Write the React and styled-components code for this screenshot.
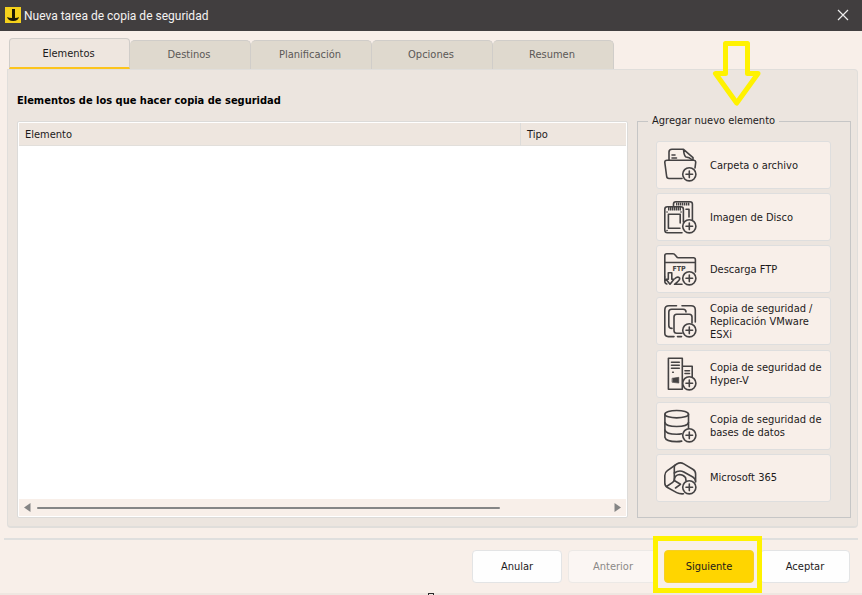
import React from "react";
import styled, { createGlobalStyle } from "styled-components";

const GlobalStyle = createGlobalStyle`
  *, *::before, *::after { box-sizing: border-box; }
  body {
    margin: 0;
    background: #f8efe9;
    color: #1c1a1b;
    font-family: "DejaVu Sans Condensed", "DejaVu Sans", sans-serif;
    font-stretch: condensed;
    font-size: 11px;
    line-height: 13px;
  }
  button { font: inherit; color: inherit; }
`;

const Window = styled.div`
  position: relative;
  display: flex;
  flex-direction: column;
  min-height: 100vh;
  border-bottom: 2px solid #efe7e1;
`;

const ResizeMark = styled.span`
  position: absolute;
  bottom: -2px;
  left: 50%;
  width: 6px;
  height: 2px;
  margin-left: -3px;
  border: 1px solid #2b2a2a;
  border-bottom: 0;
`;

const TitleBar = styled.header`
  display: flex;
  align-items: center;
  gap: 3px;
  height: 31px;
  padding: 0 13px 2px 5px;
  background: #413e3f;
  color: #f4f2f2;
`;

const Title = styled.h1`
  flex: 1;
  margin: 0;
  padding-top: 2px;
  font: 400 12px/16px Roboto, "Noto Sans", sans-serif;
`;

const CloseButton = styled.button`
  display: flex;
  padding: 0;
  border: 0;
  background: none;
  color: #eeeeee;
`;

const Body = styled.main`
  display: flex;
  flex: 1;
  flex-direction: column;
  padding: 7px 4px 0 7px;
`;

const Tabs = styled.div`
  display: flex;
  align-items: flex-end;
  height: 31px;
  padding-left: 2px;
`;

const Tab = styled.button`
  flex: 0 1 121px;
  height: ${(p) => (p.$active ? "31px" : "29px")};
  padding: ${(p) => (p.$active ? "0 2px 0 0" : "0 2px 2px 0")};
  border: 1px solid #d0cdc9;
  border-width: ${(p) => (p.$active ? "1px 1px 2px" : "1px 1px 0 0")};
  border-bottom-color: ${(p) => (p.$active ? "#fcc41c" : "#d0cdc9")};
  border-radius: ${(p) => (p.$active ? "4px 4px 0 0" : "5px 5px 0 0")};
  background: ${(p) => (p.$active ? "#eee6df" : "#dfd9ce")};
  color: ${(p) => (p.$active ? "#1c1a1b" : "#5b5856")};
`;

const Panel = styled.section`
  display: flex;
  flex: 1;
  gap: 9px;
  padding: 24px 6px 8px 9px;
  border: 1px solid #e0dedb;
  border-bottom-width: 2px;
  border-radius: 0 4px 4px 4px;
  background: #ece5df;
`;

const Items = styled.div`
  display: flex;
  flex: 1;
  flex-direction: column;
  gap: 14px;
  min-width: 0;
`;

const Heading = styled.h2`
  margin: 0;
  color: #000000;
  font-size: 11px;
  line-height: 13px;
`;

const ListFrame = styled.div`
  display: flex;
  flex: 1;
  flex-direction: column;
  padding: 1px;
  border: 1px solid #dcdbd9;
  border-radius: 2px;
  background: #ffffff;
`;

const Table = styled.table`
  width: 100%;
  border-collapse: separate;
  border-spacing: 0;
  table-layout: fixed;
`;

const HeaderCell = styled.th`
  width: ${(p) => p.$width || "auto"};
  height: 23px;
  padding: 0 6px;
  border-bottom: 1px solid #e2dfdb;
  border-left: ${(p) => (p.$divided ? "1px solid #dcdbd9" : "0")};
  background: #eee6df;
  font-weight: 400;
  text-align: left;
`;

const ScrollBar = styled.div`
  display: flex;
  align-items: center;
  gap: 6px;
  height: 17px;
  margin-top: auto;
  padding: 0 5px;
  background: #f8efe9;
`;

const ScrollTrack = styled.div`
  flex: 1;
`;

const ScrollThumb = styled.div`
  width: 81%;
  height: 2px;
  border-radius: 1px;
  background: #858585;
`;

const ScrollButton = styled.button`
  display: flex;
  padding: 0;
  border: 0;
  background: none;
  color: #858585;
`;

const Aside = styled.aside`
  position: relative;
  display: flex;
  flex: 0 0 214px;
  padding-top: 19px;
`;

const Group = styled.fieldset`
  display: flex;
  flex: 1;
  min-width: 0;
  margin: 0;
  padding: 12px 19px 15px 18px;
  border: 1px solid #c6c6c6;
`;

const Legend = styled.legend`
  margin-left: -8px;
  padding: 0 4px;
  line-height: 16px;
`;

const SourceList = styled.div`
  display: flex;
  flex: 1;
  flex-direction: column;
  justify-content: space-between;
  gap: 4px;
  min-width: 0;
`;

const SourceButton = styled.button`
  display: flex;
  align-items: center;
  gap: 12px;
  height: 48px;
  padding: 0 6px 0 7px;
  border: 1px solid #dedede;
  border-radius: 3px;
  background: #f8efe9;
  text-align: left;
`;

const IconArt = styled.svg`
  flex: none;
  width: 34px;
  height: 34px;
  fill: none;
  stroke: #444243;
  stroke-width: 1.6;
  stroke-linecap: round;
  stroke-linejoin: round;
`;

const IconText = styled.text`
  fill: #444243;
  stroke: none;
  font: 700 7px "DejaVu Sans Condensed", sans-serif;
`;

const ArrowCallout = styled.svg`
  position: absolute;
  top: -53px;
  left: 75px;
  width: 51px;
  height: 68px;
  pointer-events: none;
`;

const Footer = styled.footer`
  display: flex;
  justify-content: flex-end;
  gap: 6px;
  margin: 10px 0 0 -3px;
  padding: 10px 8px;
  border-top: 2px solid #dfdfde;
`;

const FooterButton = styled.button`
  width: 90px;
  height: 33px;
  padding: 0;
  border: 1px solid ${(p) => (p.$primary ? "#f5cf25" : "#e3e4e5")};
  border-radius: 4px;
  background: ${(p) => (p.$primary ? "#ffd500" : "#fefefe")};
  &:disabled {
    border-color: #ece9e6;
    background: #fbf6f3;
    color: #8b8987;
  }
`;

const Highlight = styled.div`
  position: relative;
  z-index: 1;
  display: flex;
  &::after {
    position: absolute;
    inset: -14px -8px -10px -11px;
    border: 5px solid #fff200;
    content: "";
    pointer-events: none;
  }
`;

const Plus = () => (
  <g>
    <circle cx="25.3" cy="26.3" r="6.6" fill="#f8efe9" />
    <path d="M22 26.3h6.6M25.3 23v6.6" />
  </g>
);

const art = {
  folder: (
    <>
      <path d="M18 30.5H5Q2.8 30.5 2.6 28L.8 14.5Q.7 12.2 3 12.2h26.5q2.3 0 2.2 2.3L31 20" />
      <path d="M5 12V4Q5 1.3 8 1.3h11.5L29 9.7V12M19.5 1.5Q20 8 22 9q3 0 6.5 3M8 7h3M8 10h4.5" />
    </>
  ),
  disk: (
    <>
      <path d="M9.5 6V4q0-2.3 2.3-2.3H26q2.4 0 2.4 2.4V20M22 9.3h3V17" />
      <path d="M12 4h14" strokeWidth="3" strokeDasharray="1.4 .6" strokeLinecap="butt" />
      <path d="M18 32.7H3.5Q.8 32.7.8 30V9.2q0-2.5 2.6-2.5h13.3q2.7 0 2.7 2.5V22" />
      <path d="M4 8.8h13" strokeWidth="3.4" strokeDasharray="1.5 .5" strokeLinecap="butt" />
      <path d="M16.2 23V14.3H4.4v14H16M3 12h.1M17 12h.1M3 30.5h.1" />
    </>
  ),
  ftp: (
    <>
      <path d="M.8 25V3.7q0-2 2-2H9q1.5 0 2.4 1.6l1 1.2q.8 1.2 2 1.2h15q2 0 2 2V20M.8 10.5h30.6" />
      <IconText x="8.5" y="19">FTP</IconText>
      <path d="M4.3 20.7v6.5H2l4 5 4-5H7.8v-6.5zM.8 25v4q0 2.5 2 3" />
      <path d="M11 26.5q2.5-2.5 4.7-.5.8 2-5.2 6.3H18" />
    </>
  ),
  vmware: (
    <>
      <path d="M12.5 1.8H5Q.8 1.8.8 6v23q0 3.6 3.5 3.6H10M18 1.8h9q4.3 0 4.3 4.2v12M13.5 32.6h4" />
      <path d="M8 24.4q-3.2 0-3.2-3V8q0-2.8 2.8-2.8h11.6q2.8 0 2.8 2.8" />
      <path d="M18 29.3h-5.3q-2.7 0-2.7-2.7V13q0-2.7 2.7-2.7h12.6q2.7 0 2.7 2.7v6" />
    </>
  ),
  hyperv: (
    <>
      <path d="M18.3 32.3H4.4V1.3h13.9zM19 9.3h9.2V20M21 13.7h4.5M21 16.5h4.5" />
      <path d="M7.5 5.3h7.8M7.5 8.2h7.8M7.5 11.2h7.8M8.7 15.2h.6" />
      <path d="M8.4 21.2l6.4-.9v5.8l-6.4-.8z" fill="#444243" strokeWidth=".6" />
    </>
  ),
  database: (
    <>
      <ellipse cx="12.7" cy="5.2" rx="11.8" ry="3.7" />
      <path d="M.9 5.2v23q1 4.4 11.8 4.4 3 0 5-.5M24.5 5.2V20" />
      <path d="M.9 13.5q1 4 11.8 4t11.8-4M.9 21q1 4.3 11.8 4.3 3 0 5-.5" />
    </>
  ),
  m365: (
    <>
      <path d="M19.5 32.8q-4 .3-6.8-1.2L3.5 26.5Q.8 25 .8 22v-7.5q0-3 2.6-4.8L12.8 3q3.6-2.2 7-.1l9 5.4q2.8 1.7 2.8 4.8V21" />
      <path d="M11 4.2Q10.3 5 10.3 7v11.5q0 1.8-1.6 2.8L2.5 25.5" />
      <path d="M10.3 12q5-3.4 9.5-1l9 5q2.5 1.5 2.7 4M10.3 19.5l6.2 3.8-5 3.7" />
      <path d="M10.3 19.5q.2-5.5 5-6 3.700 0 6.200 3l.5 3" />
    </>
  ),
};

const tabs = ["Elementos", "Destinos", "Planificación", "Opciones", "Resumen"];

const sources = [
  { icon: "folder", label: "Carpeta o archivo" },
  { icon: "disk", label: "Imagen de Disco" },
  { icon: "ftp", label: "Descarga FTP" },
  { icon: "vmware", label: "Copia de seguridad / Replicación VMware ESXi" },
  { icon: "hyperv", label: "Copia de seguridad de Hyper-V" },
  { icon: "database", label: "Copia de seguridad de bases de datos" },
  { icon: "m365", label: "Microsoft 365" },
];

export default function App() {
  return (
    <Window>
      <GlobalStyle />
      <TitleBar>
        <svg width="16" height="16" viewBox="0 0 16 16" aria-hidden="true">
          <path fill="#f5d11c" d="M0 0h16v16H0z" />
          <path fill="#1b1805" d="M7 2h3v9q2.500 0 4-1-.8 4-5.800 4T2 10q2 1 5 1z" />
        </svg>
        <Title>Nueva tarea de copia de seguridad</Title>
        <CloseButton type="button" aria-label="Cerrar">
          <svg width="12" height="12" viewBox="0 0 12 12" fill="none" stroke="currentColor" strokeWidth="1.2">
            <path d="M1 1l10 10M11 1L1 11" />
          </svg>
        </CloseButton>
      </TitleBar>
      <Body>
        <Tabs role="tablist">
          {tabs.map((name, i) => (
            <Tab key={name} type="button" role="tab" aria-selected={i === 0} $active={i === 0}>
              {name}
            </Tab>
          ))}
        </Tabs>
        <Panel role="tabpanel" aria-label="Elementos">
          <Items>
            <Heading>Elementos de los que hacer copia de seguridad</Heading>
            <ListFrame>
              <Table>
                <thead>
                  <tr>
                    <HeaderCell scope="col">Elemento</HeaderCell>
                    <HeaderCell scope="col" $width="106px" $divided>Tipo</HeaderCell>
                  </tr>
                </thead>
                <tbody />
              </Table>
              <ScrollBar>
                <ScrollButton type="button" aria-label="Desplazar a la izquierda">
                  <svg width="7" height="9" viewBox="0 0 7 9" fill="currentColor">
                    <path d="M6.5 0v9L0 4.5z" />
                  </svg>
                </ScrollButton>
                <ScrollTrack>
                  <ScrollThumb />
                </ScrollTrack>
                <ScrollButton type="button" aria-label="Desplazar a la derecha">
                  <svg width="7" height="9" viewBox="0 0 7 9" fill="currentColor">
                    <path d="M.5 0v9L7 4.5z" />
                  </svg>
                </ScrollButton>
              </ScrollBar>
            </ListFrame>
          </Items>
          <Aside>
            <Group>
              <Legend>Agregar nuevo elemento</Legend>
              <SourceList>
                {sources.map(({ icon, label }) => (
                  <SourceButton key={icon} type="button">
                    <IconArt viewBox="0 0 34 34" aria-hidden="true">
                      {art[icon]}
                      <Plus />
                    </IconArt>
                    <span>{label}</span>
                  </SourceButton>
                ))}
              </SourceList>
            </Group>
            <ArrowCallout viewBox="0 0 51 68" fill="none" stroke="#fff200" strokeWidth="5" aria-hidden="true">
              <path d="M13.5 2.500h22v30H46L24.700 62 3.500 32.500h10z" strokeLinejoin="round" />
            </ArrowCallout>
          </Aside>
        </Panel>
        <Footer>
          <FooterButton type="button">Anular</FooterButton>
          <FooterButton type="button" disabled>Anterior</FooterButton>
          <Highlight>
            <FooterButton type="button" $primary>Siguiente</FooterButton>
          </Highlight>
          <FooterButton type="button">Aceptar</FooterButton>
        </Footer>
      </Body>
      <ResizeMark />
    </Window>
  );
}
